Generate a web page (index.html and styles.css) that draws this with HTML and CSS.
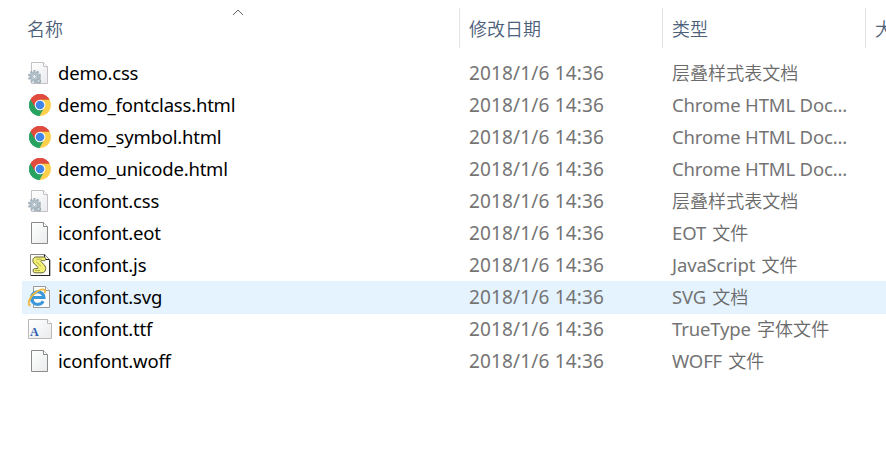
FILE: index.html
```html
<!DOCTYPE html>
<html lang="zh-CN">
<head>
<meta charset="utf-8">
<title>iconfont</title>
<link rel="stylesheet" href="styles.css">
</head>
<body>
<svg class="defs" width="0" height="0" aria-hidden="true">
  <defs>
    <linearGradient id="paper" x1="0" y1="0" x2="1" y2="1"><stop offset="0" stop-color="#fff"/><stop offset="1" stop-color="#e9ebec"/></linearGradient>
    <symbol id="page" viewBox="0 0 24 24">
      <path d="M3.5 1.5h12l4 4v17h-16z" fill="url(#paper)" stroke="#8a8a8a"/>
      <path d="M15.5 1.5v4h4" fill="#fff" stroke="#8a8a8a"/>
    </symbol>
    <symbol id="css" viewBox="0 0 24 24">
      <path d="M3.5 1.5h12l4 4v17h-16z" fill="url(#paper)" stroke="#c4bfc5"/>
      <path d="M15.5 1.5v4h4" fill="#fff" stroke="#c4bfc5"/>
      <circle cx="6.5" cy="15.5" r="5.5" fill="none" stroke="#a3b0ba" stroke-width="2" stroke-dasharray="2.2 1.256"/>
      <circle cx="6.5" cy="15.5" r="3.8" fill="#e2eaef" stroke="#acbac4" stroke-width="2.5"/>
      <circle cx="6.5" cy="15.5" r="1.8" fill="#f5f8fa" stroke="#8294a1" stroke-width=".8"/>
      <circle cx="10.5" cy="20" r="2" fill="#c6d1d8" stroke="#9aa8b2" stroke-width="1.2"/>
    </symbol>
    <symbol id="chrome" viewBox="0 0 24 24">
      <path d="M12 12L2.5 6.5A11 11 0 0 1 21.5 6.5z" fill="#df4b3d"/>
      <path d="M12 12L21.5 6.5A11 11 0 0 1 12 23z" fill="#fdd04c"/>
      <path d="M12 12v11A11 11 0 0 1 2.5 6.5z" fill="#27a260"/>
      <path d="M12 6.5h9.5L17 14.5 12 23H11l4-7z" fill="#fdd04c"/>
      <path d="M2.5 6.5l4.8 8.3L12 17.5l3.5-1.5-4 7A11 11 0 0 1 2.5 6.5z" fill="#27a260"/>
      <path d="M2.5 6.5A11 11 0 0 1 21.5 6.5H12l-4.8 8z" fill="#df4b3d"/>
      <circle cx="12" cy="12" r="5.3" fill="#fff"/><circle cx="12" cy="12" r="4.3" fill="#4285e9"/>
    </symbol>
    <symbol id="js" viewBox="0 0 24 24">
      <path d="M2.5 1.5h14l5 5v16h-19z" fill="#fdfdf8" stroke="#888"/>
      <path d="M16.5 1.5v5h5M21.7 7v15.5H3" fill="none" stroke="#222" stroke-width="1.2"/>
      <path d="M8 4h7.500c2 0 2.800 1.500 2 2.900-.7 1-2.300 1-4 .5-1 .3-.9 1 0 1.800l2.800 2.700c2.500 2.700 1.500 7.900-2.300 7.900H7C4.500 19.500 4.500 15.800 6.500 15.600h3.200c.6-.8.2-1.500-.6-2.300L6.500 11C3.500 8.300 5 4 8 4z" fill="#f3f173" stroke="#6c6a3c"/>
      <path d="M8.500 6.200h5M8 8.500l5 4.800M7 17.500h5" fill="none" stroke="#a5a34d" stroke-width=".8"/>
    </symbol>
    <symbol id="ie" viewBox="0 0 24 24">
      <path d="M5.500 1.500h12l4 4v17h-16z" fill="#fcfcfc" stroke="#9a9a9a"/>
      <path d="M17.500 1.500v4h4" fill="#fff" stroke="#9a9a9a"/>
      <path d="M15.200 16.200a6.300 6.300 0 1 1 .8-3.700H5" fill="none" stroke="#3a97da" stroke-width="3"/>
      <path d="M2.500 20.500c-4-.8-1-8 4-12.200C11 4.800 16 3 17 5.600c.2.800 0 1.800-.4 2.600" fill="none" stroke="#efb93f" stroke-width="1.900"/>
    </symbol>
    <symbol id="ttf" viewBox="0 0 24 24">
      <path d="M.5 2.500h19l4 4v15H.5z" fill="url(#paper)" stroke="#b9b9b9"/>
      <path d="M19.500 2.500v4h4" fill="#fff" stroke="#b9b9b9"/>
      <text x="2" y="19" class="glyph">A</text>
    </symbol>
  </defs>
</svg>
<main class="files">
  <header class="head">
    <div class="col first">名称<svg class="sort" width="12" height="7" viewBox="0 0 12 7"><path d="M1 6l5-5 5 5" fill="none" stroke="#666"/></svg></div>
    <div class="col">修改日期</div><div class="col">类型</div><div class="col">大小</div>
  </header>
  <div class="row"><svg class="icon"><use href="#css"/></svg><span class="name">demo.css</span><span class="date">2018/1/6 14:36</span><span class="type"><b class="lead">层叠样式表文档</b></span></div>
  <div class="row"><svg class="icon"><use href="#chrome"/></svg><span class="name">demo_fontclass.html</span><span class="date">2018/1/6 14:36</span><span class="type">Chrome HTML Doc...</span></div>
  <div class="row"><svg class="icon"><use href="#chrome"/></svg><span class="name">demo_symbol.html</span><span class="date">2018/1/6 14:36</span><span class="type">Chrome HTML Doc...</span></div>
  <div class="row"><svg class="icon"><use href="#chrome"/></svg><span class="name">demo_unicode.html</span><span class="date">2018/1/6 14:36</span><span class="type">Chrome HTML Doc...</span></div>
  <div class="row"><svg class="icon"><use href="#css"/></svg><span class="name">iconfont.css</span><span class="date">2018/1/6 14:36</span><span class="type"><b class="lead">层叠样式表文档</b></span></div>
  <div class="row"><svg class="icon"><use href="#page"/></svg><span class="name">iconfont.eot</span><span class="date">2018/1/6 14:36</span><span class="type">EOT <b>文件</b></span></div>
  <div class="row"><svg class="icon"><use href="#js"/></svg><span class="name">iconfont.js</span><span class="date">2018/1/6 14:36</span><span class="type">JavaScript <b>文件</b></span></div>
  <div class="row active"><svg class="icon"><use href="#ie"/></svg><span class="name">iconfont.svg</span><span class="date">2018/1/6 14:36</span><span class="type">SVG <b>文档</b></span></div>
  <div class="row"><svg class="icon"><use href="#ttf"/></svg><span class="name">iconfont.ttf</span><span class="date">2018/1/6 14:36</span><span class="type">TrueType <b>字体文件</b></span></div>
  <div class="row"><svg class="icon"><use href="#page"/></svg><span class="name">iconfont.woff</span><span class="date">2018/1/6 14:36</span><span class="type">WOFF <b>文件</b></span></div>
</main>
</body>
</html>
```
FILE: styles.css
```css
body {
  margin: 0;
  height: 449px;
  overflow: hidden;
  background: #fff;
  font-family: "Noto Sans", "Noto Sans CJK SC", sans-serif;
  font-size: 18px;
}
.defs { position: absolute; }
.files { padding: 8px 0 0 22px; }
.head {
  display: grid;
  grid-template-columns: 438px 203px 203px 60px;
  height: 40px;
  margin-bottom: 9px;
  color: #4c607a;
  font-family: "Noto Sans CJK SC", sans-serif;
  font-weight: 350;
  line-height: 40px;
}
.col {
  position: relative;
  box-sizing: border-box;
  padding-left: 9px;
  border-right: 1px solid #e3e3e3;
  white-space: nowrap;
}
.first { padding-left: 5px; }
.sort { position: absolute; left: 210px; top: 1px; }
.row {
  display: grid;
  grid-template-columns: 24px 417px 203px 1fr;
  align-items: center;
  height: 32px;
  padding-left: 6px;
  line-height: 32px;
  white-space: nowrap;
}
.active { background: #e5f3ff; box-shadow: 0 1px #e5f3ff; }
.icon { width: 24px; height: 24px; }
.name { padding-left: 6px; color: #000; font-size: 18.5px; letter-spacing: -0.2px; }
.date { color: #747474; font-size: 19px; letter-spacing: 0.15px; }
.type { color: #747474; font-size: 18.5px; letter-spacing: -0.15px; }
.type b {
  margin-left: 1.5px;
  color: #6a6a6a;
  font-family: "Noto Sans CJK SC", sans-serif;
  font-size: 18px;
  font-weight: 350;
  letter-spacing: 0.05px;
  line-height: 1;
}
.type .lead { margin-left: 0; }
.glyph { fill: #2d5fae; font: bold 12px "Liberation Serif", serif; }
```
